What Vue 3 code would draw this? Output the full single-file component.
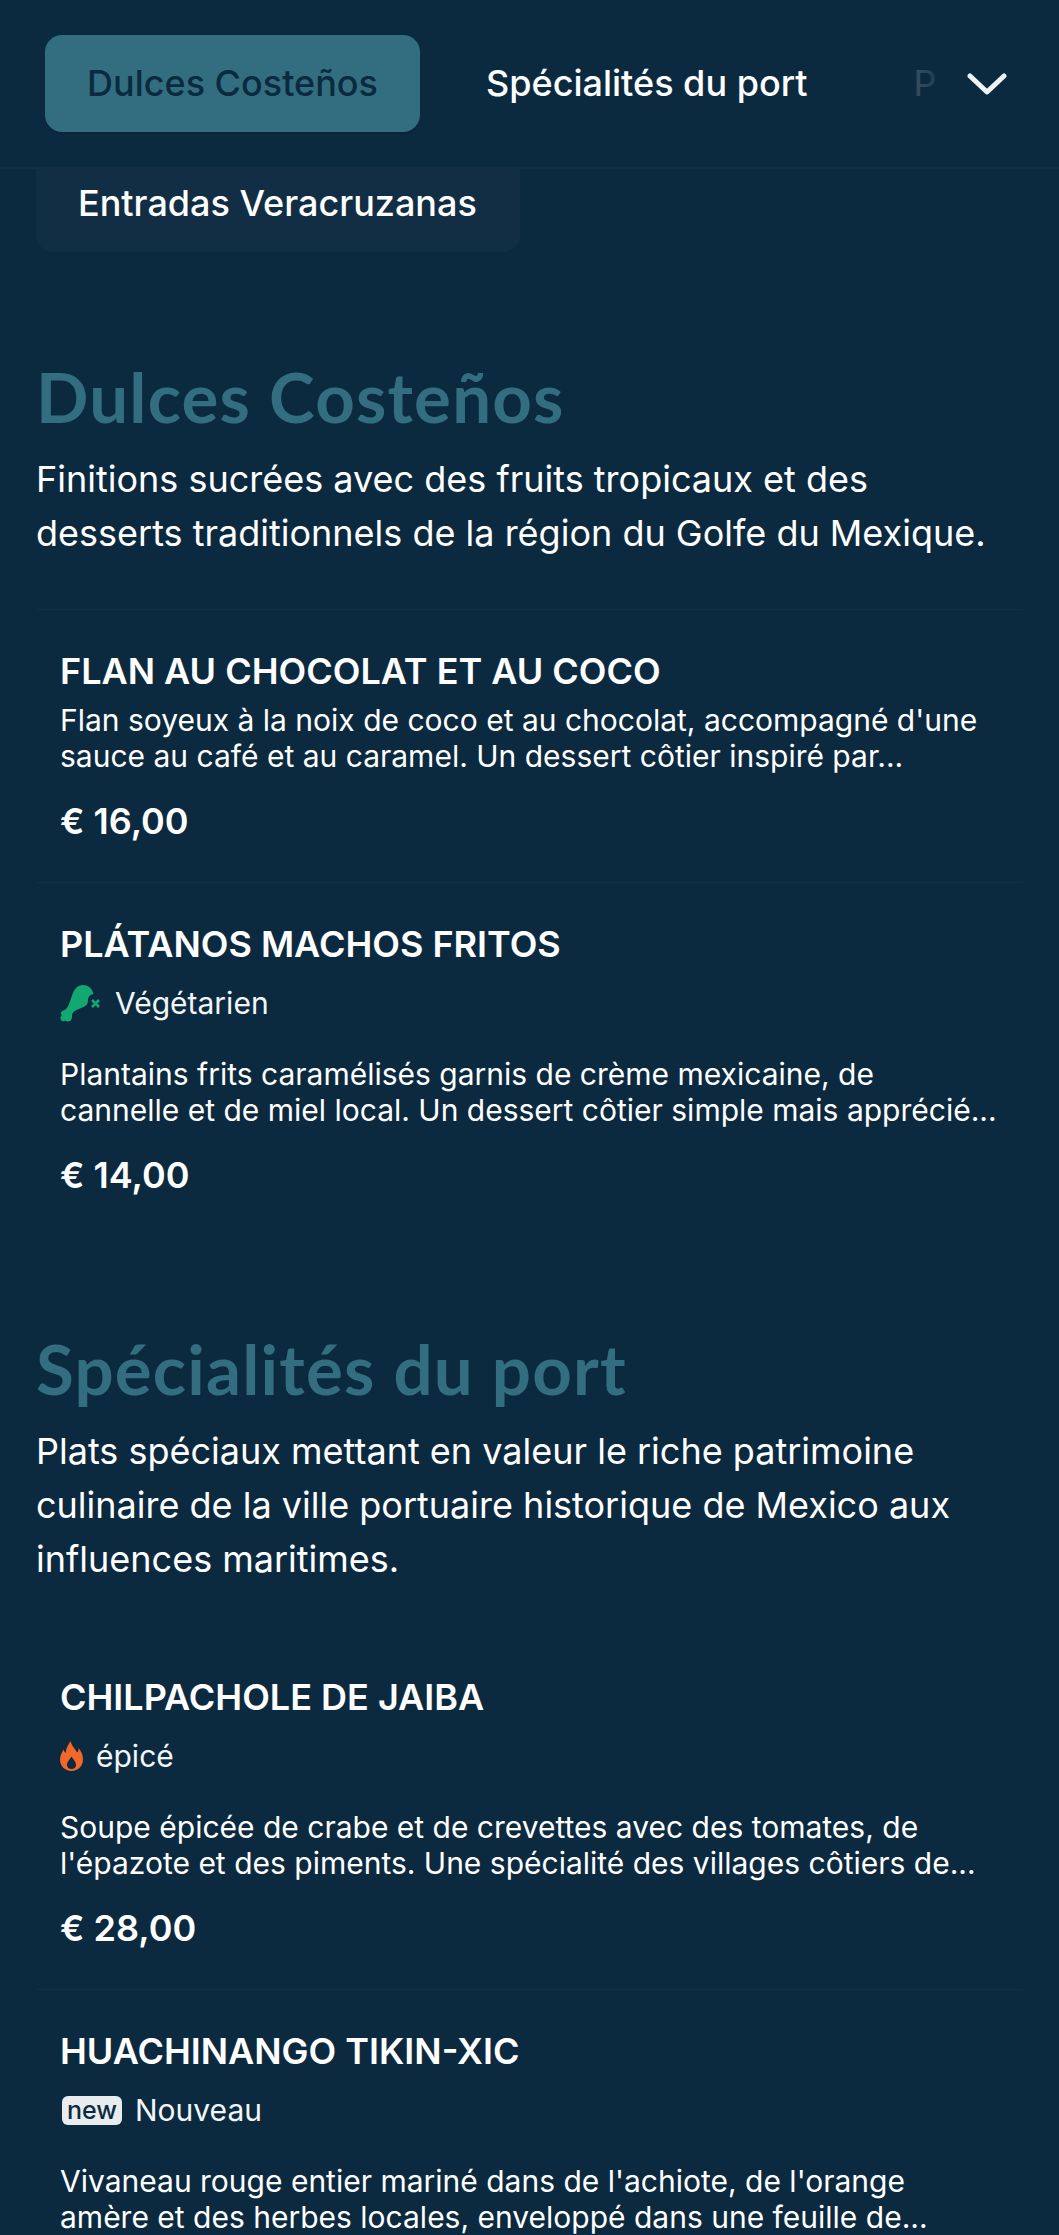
<script setup>
const sections = [
  {
    title: 'Dulces Costeños',
    desc: 'Finitions sucrées avec des fruits tropicaux et des desserts traditionnels de la région du Golfe du Mexique.',
    ruled: true,
    items: [
      { name: 'FLAN AU CHOCOLAT ET AU COCO', text: "Flan soyeux à la noix de coco et au chocolat, accompagné d'une sauce au café et au caramel. Un dessert côtier inspiré par...", price: '€ 16,00' },
      { name: 'PLÁTANOS MACHOS FRITOS', tag: 'veg', label: 'Végétarien', text: 'Plantains frits caramélisés garnis de crème mexicaine, de cannelle et de miel local. Un dessert côtier simple mais apprécié...', price: '€ 14,00' },
    ],
  },
  {
    title: 'Spécialités du port',
    desc: 'Plats spéciaux mettant en valeur le riche patrimoine culinaire de la ville portuaire historique de Mexico aux influences maritimes.',
    ruled: false,
    items: [
      { name: 'CHILPACHOLE DE JAIBA', tag: 'hot', label: 'épicé', text: "Soupe épicée de crabe et de crevettes avec des tomates, de l'épazote et des piments. Une spécialité des villages côtiers de...", price: '€ 28,00' },
      { name: 'HUACHINANGO TIKIN-XIC', tag: 'new', label: 'Nouveau', text: "Vivaneau rouge entier mariné dans de l'achiote, de l'orange amère et des herbes locales, enveloppé dans une feuille de...", price: '€ 32,00' },
    ],
  },
]
</script>

<template>
  <div class="page">
    <header class="bar">
      <nav class="tabs">
        <span class="tab active">Dulces Costeños</span>
        <span class="tab">Spécialités du port</span>
        <span class="tab">Poissons</span>
      </nav>
      <div class="more">
        <svg class="chev" viewBox="0 0 40 22" width="40" height="22" aria-hidden="true">
          <path d="M3 3 L20 19 L37 3" fill="none" stroke="#eef3f6" stroke-width="5" stroke-linecap="round" stroke-linejoin="round" />
        </svg>
      </div>
    </header>
    <div class="overflow-row"><span class="pill">Entradas Veracruzanas</span></div>

    <section v-for="s in sections" :key="s.title" class="section">
      <h2>{{ s.title }}</h2>
      <p class="intro">{{ s.desc }}</p>
      <ul class="list" :class="{ ruled: s.ruled }">
        <li v-for="it in s.items" :key="it.name" class="item">
          <h3>{{ it.name }}</h3>
          <div v-if="it.tag" class="tag">
            <svg v-if="it.tag === 'veg'" class="ic-veg" viewBox="0 0 42 37" width="42" height="37" aria-hidden="true">
              <path fill="#12a871" d="M23 0C28 0 32 3 33.500 9 30 9.500 28 12 28 15.500 28 18 27 20 24.500 21.500 21 23.500 16.500 24.500 13.500 27 12 28.500 12 30 12 32 12 34.500 10 37 7.500 36.500 6 36 5.500 35.500 4.500 36 2.500 36.800 0 35 .5 32.500 .8 31 1.500 30.500 2 30 1 29.500 .5 28.500 1 27.500 2 25.500 4.500 25.500 6 24 9 21 10 16 12 10.500 14 4 18 0 23 0Z" />
              <path d="M32 15l7 7M39 15l-7 7" stroke="#12a871" stroke-width="2.6" fill="none" />
            </svg>
            <svg v-else-if="it.tag === 'hot'" class="ic-hot" viewBox="0 0 23 30" width="23" height="30" aria-hidden="true">
              <path fill="#f2672a" fill-rule="evenodd" d="M10.500 0C11.500 4 13.500 6.500 15.500 9 16.500 10.500 17 11 17.500 11.500 18.500 10 18.500 8.500 18.500 7 21.500 10.500 23 14.500 23 18.500 23 25 18 30 11.500 30 5 30 0 25 0 18.500 0 14.500 2 11.500 3.500 8.500 4 10 4.500 11 5.500 12 6 7.500 8 4 10.500 0ZM11.500 15.500C10 18.500 7 20.500 7 24 7 26.500 9 28 11.500 28 14 28 16 26.500 16 24 16 20.500 13 18.500 11.500 15.500Z" />
            </svg>
            <span v-else class="badge">new</span>
            <span>{{ it.label }}</span>
          </div>
          <p class="text">{{ it.text }}</p>
          <div class="price">{{ it.price }}</div>
        </li>
      </ul>
    </section>
  </div>
</template>

<style>
body { margin: 0; background: #0c2a3f; }
</style>

<style scoped>
.page {
  width: 1059px;
  height: 2235px;
  overflow: hidden;
  background: #0c2a3f;
  color: #fff;
  font-family: Inter, "Liberation Sans", sans-serif;
  box-sizing: border-box;
}
.bar {
  position: relative;
  z-index: 2;
  display: flex;
  align-items: flex-start;
  height: 169px;
  box-sizing: border-box;
  padding: 35px 0 0 45px;
  border-bottom: 2px solid #112f45;
  background: #0c2a3f;
}
.tabs {
  display: flex;
  gap: 2px;
  width: 890px;
  height: 100px;
  overflow: hidden;
  flex: none;
}
.tab {
  flex: none;
  display: flex;
  align-items: center;
  height: 97px;
  padding: 0 62px 2px 42px;
  box-sizing: border-box;
  font-size: 36px;
  font-weight: 500;
  white-space: nowrap;
}
.tab.active {
  width: 375px;
  padding: 0 0 2px 42px;
  background: #326e80;
  color: #0c2a3f;
  border-radius: 17px;
  box-shadow: 0 2px 0 #0a2538;
}
.tab:nth-child(2) { padding-left: 64px; }
.tab:nth-child(3) { font-weight: 400; }
.more {
  position: relative;
  flex: 1;
  height: 97px;
  display: flex;
  align-items: center;
  padding-left: 32px;
}
.more::before {
  content: "";
  position: absolute;
  left: -40px;
  top: 0;
  bottom: 0;
  width: 40px;
  background: linear-gradient(90deg, rgba(12, 42, 63, 0.76), rgba(12, 42, 63, 0.9));
}
.overflow-row {
  padding-left: 36px;
  height: 83px;
}
.pill {
  display: flex;
  align-items: center;
  width: 484px;
  height: 83px;
  box-sizing: border-box;
  padding: 0 0 16px 42px;
  background: #122e44;
  border-radius: 0 0 17px 17px;
  font-size: 36px;
  font-weight: 500;
}
.section { padding: 0 36px; }
h2 {
  margin: 0;
  font-family: Lato, sans-serif;
  font-size: 69px;
  letter-spacing: 1.2px;
  font-weight: 700;
  line-height: 80px;
  color: #326e80;
}
.section:nth-of-type(1) h2 { padding-top: 105px; }
.section:nth-of-type(2) h2 { padding-top: 93px; }
.intro {
  margin: 15px 0 0;
  font-size: 36px;
  line-height: 54px;
}
.list { list-style: none; margin: 50px 0 0; padding: 0; }
.list.ruled { margin-top: 49px; border-top: 1px solid #122f45; }
.item {
  padding: 39px 0 39px 24px;
  border-bottom: 1px solid #122f45;
}
.item:last-child { border-bottom: 0; }
h3 { margin: 0; font-size: 36px; font-weight: 600; line-height: 45px; }
.tag {
  display: flex;
  align-items: center;
  gap: 13px;
  height: 40px;
  margin-top: 16px;
  font-size: 30px;
  color: #f1f6f8;
}
.badge {
  display: inline-flex;
  align-items: center;
  justify-content: center;
  width: 60px;
  height: 29px;
  margin-left: 2px;
  background: #e8ecef;
  color: #0c2a3f;
  border-radius: 6px;
  font-size: 25px;
  font-weight: 500;
}
.text {
  margin: 0;
  font-size: 30px;
  line-height: 36px;
  padding-top: 8px;
  padding-right: 24px;
}
.tag + .text { padding-top: 33px; }
.price {
  margin-top: 25px;
  font-size: 36px;
  font-weight: 600;
  line-height: 44px;
}
</style>
